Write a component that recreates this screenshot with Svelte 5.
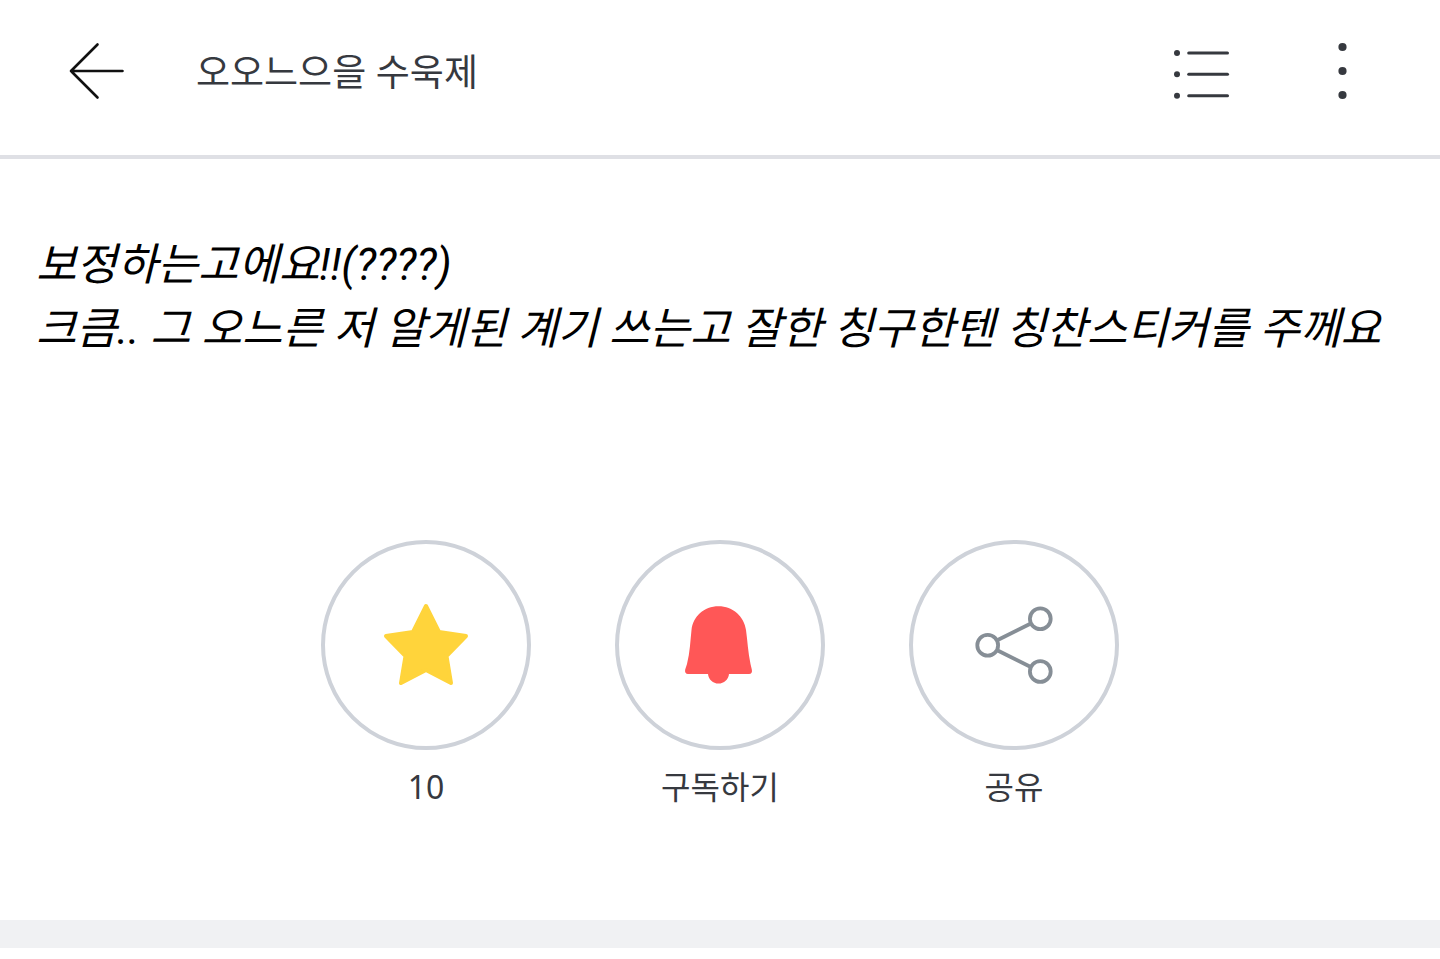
<script lang="ts">
	let title = '오오느으을 수욱제';
	let lines = [
		'보정하는고에요!!(????)',
		'크큼.. 그 오느른 저 알게된 계기 쓰는고 잘한 칭구한텐 칭찬스티커를 주께요'
	];

	let stars = $state(10);
	let starred = $state(true);
	let subscribed = $state(true);

	function toggleStar() {
		starred = !starred;
		stars += starred ? 1 : -1;
	}
</script>

<div class="page">
	<header class="top-bar">
		<button class="icon-button" type="button" aria-label="뒤로">
			<svg width="60" height="60" viewBox="0 0 60 60" class="icon-back">
				<path d="M31.500 3.500 L5 30 L31.500 56.500 M5 30 H56.500" />
			</svg>
		</button>
		<h1>{title}</h1>
		<button class="icon-button" type="button" aria-label="목록">
			<svg width="60" height="60" viewBox="0 0 60 60" class="icon-menu">
				{#each [12, 33.3, 54.8] as y}
					<circle cx="6" cy={y} r="3" />
					<path d="M17.700 {y} H56.500" />
				{/each}
			</svg>
		</button>
		<button class="icon-button more" type="button" aria-label="더보기">
			<svg width="60" height="60" viewBox="0 0 60 60" class="icon-menu">
				{#each [6, 30, 54] as y}
					<circle cx="30.5" cy={y} r="4.1" />
				{/each}
			</svg>
		</button>
	</header>

	<main>
		<article class="post">
			{#each lines as line}
				<p>{line}</p>
			{/each}
		</article>

		<div class="actions">
			<div class="action">
				<button id="star" class="round" class:off={!starred} type="button" onclick={toggleStar}>
					<svg width="100" height="100" viewBox="0 0 100 100" class="star">
						<path d="M50 11 L63 37 L90 41 L70.500 61 L75 88 L50 75 L25 88 L29.500 61 L10 41 L37 37 Z" />
					</svg>
				</button>
				<label for="star">{stars}</label>
			</div>
			<div class="action">
				<button
					id="subscribe"
					class="round"
					class:off={!subscribed}
					type="button"
					onclick={() => (subscribed = !subscribed)}
				>
					<svg width="100" height="100" viewBox="0 0 100 100" class="bell">
						<path
							d="M48.500 11.300 C34 11.300 23 21.500 21.500 35 C20.300 46 20 57 17 69 L15.200 74.500 C14.500 77 15.800 79 18 79 H38 C38.500 84.500 43 88.600 48.500 88.600 C54 88.600 58.500 84.500 59 79 H79 C81.500 79 82.500 77 81.800 74.500 L80.500 69 C78 57 77.500 46 76 35 C74 21.500 63 11.300 48.500 11.300 Z"
						/>
					</svg>
				</button>
				<label for="subscribe">구독하기</label>
			</div>
			<div class="action">
				<button id="share" class="round" type="button">
					<svg width="100" height="100" viewBox="0 0 100 100" class="share">
						<circle cx="23.700" cy="50.300" r="10.400" />
						<circle cx="76.300" cy="23.800" r="10.400" />
						<circle cx="76.300" cy="76.500" r="10.400" />
						<path d="M33.200 45.300 L66.800 28.500 M33.200 55.300 L66.800 72" />
					</svg>
				</button>
				<label for="share">공유</label>
			</div>
		</div>
	</main>

	<div class="divider"></div>
</div>

<style>
	:global(body) {
		margin: 0;
		background: #fff;
	}

	.page {
		font-family: 'Noto Sans', 'Noto Sans CJK KR', sans-serif;
		color: #36393f;
	}

	button {
		padding: 0;
		background: none;
		cursor: pointer;
	}

	/* Header */
	.top-bar {
		display: flex;
		align-items: flex-start;
		padding: 41px 68px 52px 66px;
		border-bottom: 4px solid #dfe0e5;
	}

	h1 {
		flex: 1;
		margin: 0 0 0 70px;
		font-size: 37px;
		font-weight: 400;
		line-height: 62px;
	}

	.icon-button {
		display: flex;
		border: 0;
	}

	.more {
		margin-left: 81px;
	}

	.icon-back {
		fill: none;
		stroke: #111;
		stroke-width: 2.6;
		stroke-linecap: round;
		stroke-linejoin: round;
	}

	.icon-menu {
		fill: #36393f;
		stroke-linecap: round;
	}

	.icon-menu path {
		stroke: #36393f;
		stroke-width: 3;
	}

	/* Post body */
	.post {
		padding: 74px 36px 0;
		font-family: Roboto, 'Noto Sans CJK KR', sans-serif;
		font-size: 44px;
		font-style: italic;
		line-height: 64px;
		color: #000;
	}

	.post p {
		margin: 0;
	}

	/* Round actions under the post */
	.actions {
		display: flex;
		justify-content: center;
		gap: 84px;
		padding: 179px 0 108px;
	}

	.action {
		display: flex;
		flex-direction: column;
		align-items: center;
		gap: 12px;
	}

	.round {
		display: flex;
		align-items: center;
		justify-content: center;
		box-sizing: border-box;
		width: 210px;
		height: 210px;
		border: 4px solid #ced2d9;
		border-radius: 50%;
	}

	.action label {
		font-size: 32px;
		line-height: 50px;
		cursor: pointer;
	}

	.star {
		fill: #ffd43b;
		stroke: #ffd43b;
		stroke-width: 4;
		stroke-linejoin: round;
	}

	.bell {
		fill: #ff5757;
	}

	.off .star,
	.off .bell {
		fill: #ced2d9;
		stroke: #ced2d9;
	}

	.share {
		fill: none;
		stroke: #868e96;
		stroke-width: 3.8;
	}

	.divider {
		height: 28px;
		background: #f0f1f3;
	}
</style>
